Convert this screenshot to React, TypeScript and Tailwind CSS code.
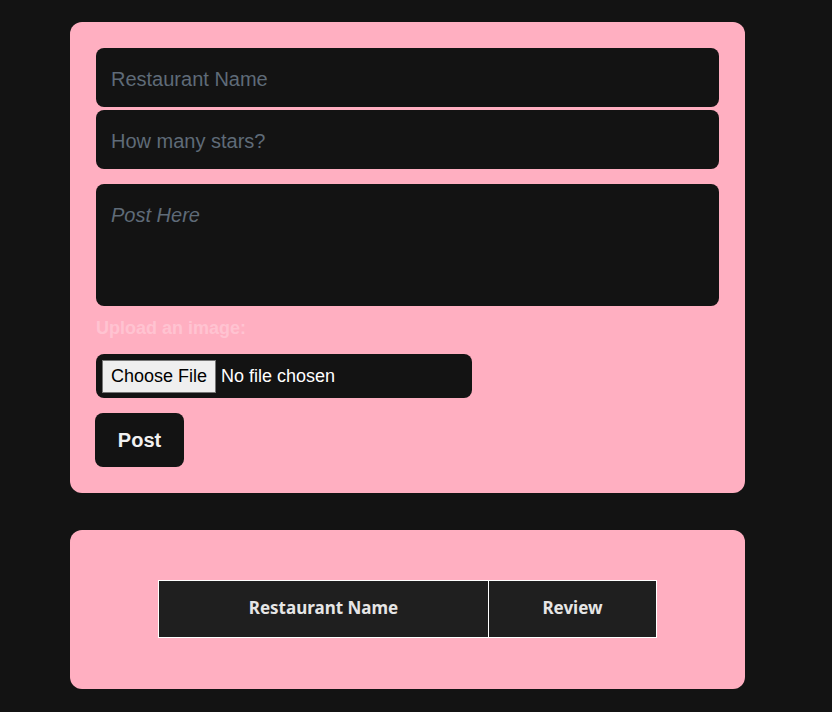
import { useState } from "react";

const comic = '"Comic Sans MS", "Liberation Sans", sans-serif';

export default function App() {
  const [name, setName] = useState("");
  const [stars, setStars] = useState("");
  const [post, setPost] = useState("");

  return (
    <div className="min-h-[712px] bg-[#131313] pt-[22px] pb-6" style={{ fontFamily: comic }}>
      <div className="ml-[70px] w-[675px]">
        <form
          onSubmit={(e) => e.preventDefault()}
          className="flex flex-col rounded-xl bg-[#ffafc1] px-[26px] pt-[26px] pb-[26px]"
        >
          <input
            value={name}
            onChange={(e) => setName(e.target.value)}
            placeholder="Restaurant Name"
            className="h-[59px] w-full rounded-lg bg-[#131313] px-[15px] pt-[3px] text-[20px] text-white outline-none placeholder:text-[#5f6b78]"
          />
          <input
            value={stars}
            onChange={(e) => setStars(e.target.value)}
            placeholder="How many stars?"
            className="mt-[3px] h-[59px] w-full rounded-lg bg-[#131313] px-[15px] pt-[3px] text-[20px] text-white outline-none placeholder:text-[#5f6b78]"
          />
          <textarea
            value={post}
            onChange={(e) => setPost(e.target.value)}
            placeholder="Post Here"
            className="mt-[15px] h-[122px] w-full resize-none rounded-lg bg-[#131313] px-[15px] py-[16px] text-[20px] text-white italic outline-none placeholder:text-[#5f6b78]"
          />
          <label className="mt-[9px] text-[18px] font-bold text-[#ffc3d1]">Upload an image:</label>
          <div className="mt-[12px] flex h-[44px] w-[376px] items-center rounded-lg bg-[#131313] px-[6px]">
            <input
              type="file"
              className="text-[18px] text-white file:mr-[5px] file:border file:border-[#767676] file:bg-[#efefef] file:px-[8px] file:py-[2px] file:text-black"
            />
          </div>
          <button
            type="submit"
            className="mt-[15px] h-[54px] w-[89px] -ml-px rounded-lg bg-[#131313] text-[20px] font-bold text-[#f1f1f1]"
          >
            Post
          </button>
        </form>

        <div className="mt-[37px] flex justify-center rounded-xl bg-[#ffafc1] pt-[50px] pb-[51px]">
          <table className="w-[499px] border-collapse" style={{ fontFamily: '"Noto Sans", "Open Sans", sans-serif' }}>
            <thead>
              <tr className="h-[57px] bg-[#1f1f1f] text-[17px] font-bold text-[#e6e6e6]">
                <th className="w-[330px] border border-white pb-[2px]">Restaurant Name</th>
                <th className="border border-white pb-[2px]">Review</th>
              </tr>
            </thead>
          </table>
        </div>
      </div>
    </div>
  );
}
